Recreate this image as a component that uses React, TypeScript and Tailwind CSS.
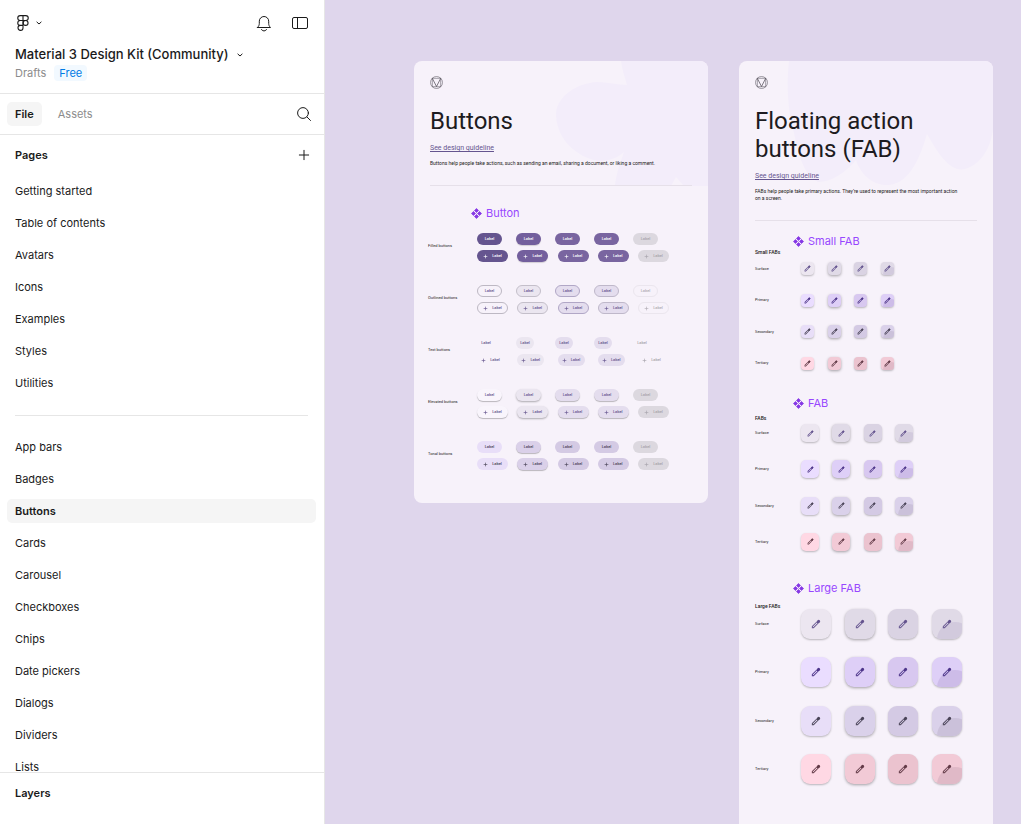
import { Plus } from "lucide-react";

const pages = ["Getting started", "Table of contents", "Avatars", "Icons", "Examples", "Styles", "Utilities"];
const components = [
  "App bars", "Badges", "Buttons", "Cards", "Carousel", "Checkboxes",
  "Chips", "Date pickers", "Dialogs", "Dividers", "Lists",
];

const buttonGroups = [
  {
    name: "Filled buttons",
    states: [
      "bg-[#65558f] text-white",
      "bg-[#735f9d] text-white shadow-[0_1px_1px_rgba(0,0,0,0.15)]",
      "bg-[#7965a0] text-white",
      "bg-[#7965a0] text-white",
      "bg-[#dcd8df] text-[#a7a3ab]",
    ],
  },
  {
    name: "Outlined buttons",
    states: [
      "border border-[#bdb8c3] text-[#65558f]",
      "border border-[#c4bfca] bg-[#ebe6f0] text-[#65558f]",
      "border border-[#b1a7c6] bg-[#e4ddee] text-[#65558f]",
      "border border-[#bfb8ca] bg-[#e4ddee] text-[#65558f]",
      "border border-[#ebe6ee] text-[#b0acb4]",
    ],
  },
  {
    name: "Text buttons",
    text: true,
    states: [
      "text-[#65558f]",
      "bg-[#ebe6f0] text-[#65558f]",
      "bg-[#e4ddee] text-[#65558f]",
      "bg-[#e4ddee] text-[#65558f]",
      "text-[#a7a3ab]",
    ],
  },
  {
    name: "Elevated buttons",
    states: [
      "bg-[#f9f5fc] text-[#65558f] shadow-[0_1px_1px_rgba(0,0,0,0.25)]",
      "bg-[#ebe6f0] text-[#65558f] shadow-[0_1px_2px_rgba(0,0,0,0.3)]",
      "bg-[#e4ddee] text-[#65558f] shadow-[0_1px_1px_rgba(0,0,0,0.25)]",
      "bg-[#e4ddee] text-[#65558f] shadow-[0_1px_1px_rgba(0,0,0,0.25)]",
      "bg-[#dcd8df] text-[#a7a3ab]",
    ],
  },
  {
    name: "Tonal buttons",
    states: [
      "bg-[#e8def8] text-[#4a4458]",
      "bg-[#dad0e9] text-[#4a4458] shadow-[0_1px_1px_rgba(0,0,0,0.25)]",
      "bg-[#d4cae4] text-[#4a4458]",
      "bg-[#d4cae4] text-[#4a4458]",
      "bg-[#dcd8df] text-[#a7a3ab]",
    ],
  },
];

const fabColors = [
  { name: "Surface", icon: "text-[#65558f]", states: ["bg-[#ece6f0]", "bg-[#e0dae7]", "bg-[#dad3e3]", "bg-[#e0dae7]"], ripple: "bg-[#d2cadd]" },
  { name: "Primary", icon: "text-[#4f378b]", states: ["bg-[#eaddff]", "bg-[#decff7]", "bg-[#d8c8f0]", "bg-[#decff7]"], ripple: "bg-[#cdbce8]" },
  { name: "Secondary", icon: "text-[#4a4458]", states: ["bg-[#e8def8]", "bg-[#dad1ea]", "bg-[#d4cae4]", "bg-[#dad1ea]"], ripple: "bg-[#cbc1da]" },
  { name: "Tertiary", icon: "text-[#633b48]", states: ["bg-[#ffd8e4]", "bg-[#f2cad6]", "bg-[#ebc3cf]", "bg-[#f2cad6]"], ripple: "bg-[#e0b9c7]" },
];

const fabSizes = {
  small: { label: "", grid: "mt-[7px] h-[108px]", row: "w-[93px]", box: "size-[13px] rounded-[4px]", icon: "size-[7px]" },
  medium: { label: "mt-1", grid: "mt-[3px] h-[127px]", row: "w-[112px]", box: "size-[18px] rounded-[5px]", icon: "size-[7px]" },
  large: { label: "mt-[7px]", grid: "h-[175px]", row: "w-[161px]", box: "size-[30px] rounded-[9px]", icon: "size-[10px]" },
};

function FigmaIcon() {
  return (
    <svg className="h-4 w-3" viewBox="0 0 12 16" fill="none" stroke="currentColor" strokeWidth="1.1">
      <path d="M6 .6H3.200a2.450 2.450 0 0 0 0 4.900H6zM6 .6h2.800a2.450 2.450 0 0 1 0 4.900H6zM6 5.500H3.200a2.450 2.450 0 0 0 0 4.900H6zM6 10.400H3.200A2.500 2.500 0 1 0 6 12.900z" />
      <circle cx="8.6" cy="7.950" r="2.450" />
    </svg>
  );
}

function ChevronIcon() {
  return (
    <svg className="h-[4px] w-[6px]" viewBox="0 0 6 4" fill="none" stroke="currentColor">
      <path d="m.6.8 2.400 2.200L5.400.8" />
    </svg>
  );
}

function BellIcon() {
  return (
    <svg className="h-[17px] w-4" viewBox="0 0 16 17" fill="none" stroke="currentColor" strokeLinecap="round" strokeLinejoin="round">
      <path d="M1.500 12.500h13c-1.200-1.200-1.800-2.400-1.800-4V6.200a4.700 4.700 0 0 0-9.400 0v2.300c0 1.600-.6 2.800-1.800 4zM5.500 14.500a2.600 2 0 0 0 5 0" />
    </svg>
  );
}

function PanelIcon() {
  return (
    <svg className="h-3 w-4" viewBox="0 0 16 12" fill="none" stroke="currentColor">
      <rect x=".5" y=".5" width="15" height="11" rx="1.5" />
      <path d="M5.500.5v11" />
    </svg>
  );
}

function SearchIcon() {
  return (
    <svg className="size-[14px]" viewBox="0 0 14 14" fill="none" stroke="currentColor" strokeLinecap="round">
      <circle cx="6" cy="6" r="5.4" />
      <path d="m10 10 3.500 3.500" />
    </svg>
  );
}

function MaterialLogo() {
  return (
    <svg className="size-[13px]" viewBox="0 0 13 13" fill="none" stroke="#49454f" strokeWidth=".5">
      <circle cx="6.5" cy="6.5" r="6" />
      <path d="M2.300 2.300h8.400v8.400H2.300z" />
      <path d="m2.300 2.300 4.200 8.200 4.200-8.200" strokeWidth=".7" />
    </svg>
  );
}

function ComponentIcon() {
  return (
    <svg className="size-[11px]" viewBox="0 0 12 12" fill="#8638e5" stroke="#8638e5" strokeWidth=".8" strokeLinejoin="round">
      <path d="M6 .5 8.200 2.700 6 4.900 3.800 2.700zM6 7.100l2.200 2.200L6 11.500 3.800 9.300zM2.700 3.800 4.900 6 2.700 8.200.5 6zM9.300 3.800 11.500 6 9.300 8.200 7.100 6z" />
    </svg>
  );
}

function PencilIcon({ className }: { className: string }) {
  return (
    <svg className={`relative ${className}`} viewBox="0 0 24 24" fill="currentColor">
      <path d="M4 20h1.500L15.500 10 14 8.500 4 18.500V20zM2 22v-4.500L16.800 2.700a2 2 0 0 1 2.800 0l1.700 1.700a2 2 0 0 1 0 2.800L6.500 22H2z" />
      <path d="m14.500 5 2.300-2.300a2 2 0 0 1 2.800 0l1.700 1.700a2 2 0 0 1 0 2.800L19 9.500z" />
    </svg>
  );
}

function PageLink({ name, active = false }: { name: string; active?: boolean }) {
  return (
    <li className="py-1 pr-2 pl-[7px]">
      <a href="#" className={`flex h-6 items-center rounded-[5px] px-2 text-[11px] ${active ? "bg-[#f5f5f5] font-semibold" : ""}`}>
        {name}
      </a>
    </li>
  );
}

function Sidebar() {
  return (
    <aside className="flex w-[325px] shrink-0 flex-col border-r border-[#e6e6e6] bg-white text-[#1a1a1a]">
      <header className="h-[94px] shrink-0 border-b border-[#e6e6e6] pt-[14px] pr-4 pl-[15px]">
        <div className="flex h-[18px] items-center">
          <button aria-label="Main menu" className="flex items-center gap-[7px] pl-[2px]">
            <FigmaIcon />
            <ChevronIcon />
          </button>
          <button aria-label="Notifications" className="ml-auto"><BellIcon /></button>
          <button aria-label="Minimize UI" className="ml-5"><PanelIcon /></button>
        </div>
        <button className="mt-[13px] flex h-5 items-center gap-[9px] text-[13px] font-medium">
          Material 3 Design Kit (Community)
          <ChevronIcon />
        </button>
        <div className="flex h-4 items-center gap-2 text-[11px] text-[#8c8c8c]">
          <a href="#">Drafts</a>
          <span className="rounded-[4px] bg-[#f2f9ff] px-[5px] leading-4 text-[#007be5]">Free</span>
        </div>
      </header>
      <nav className="flex h-[41px] shrink-0 items-center border-b border-[#e6e6e6] pr-[13px] pl-[7px] text-[11px]">
        <button className="h-6 rounded-[5px] bg-[#f5f5f5] px-2 font-semibold">File</button>
        <button className="ml-2 h-6 px-2 text-[#8c8c8c]">Assets</button>
        <button aria-label="Find" className="ml-auto"><SearchIcon /></button>
      </nav>
      <div className="flex h-10 shrink-0 items-center justify-between pr-3 pl-[15px]">
        <h2 className="text-[11px] font-semibold">Pages</h2>
        <button aria-label="Add page"><Plus className="size-4" strokeWidth={1.5} /></button>
      </div>
      <div className="min-h-0 flex-1 overflow-hidden">
        <ul>
          {pages.map(p => <PageLink key={p} name={p} />)}
        </ul>
        <hr className="mt-4 mr-4 mb-[15px] ml-[15px] border-[#e6e6e6]" />
        <ul>
          {components.map(p => <PageLink key={p} name={p} active={p === "Buttons"} />)}
        </ul>
      </div>
      <section className="h-[52px] shrink-0 border-t border-[#e6e6e6] px-[15px] pt-3">
        <h2 className="text-[11px] leading-4 font-semibold">Layers</h2>
      </section>
    </aside>
  );
}

function FrameHeader({ title, text }: { title: string; text: string }) {
  return (
    <div className="relative border-b border-[#e6e0e9] pb-[18px]">
      <MaterialLogo />
      <h1 className="mt-[18px] text-[24px] leading-7 text-[#1d1b20]">{title}</h1>
      <a href="#" className="mt-[7px] block text-[7px] leading-3 text-[#65558f] underline">See design guideline</a>
      <p className="mt-[6px] text-[5px] leading-[7px] whitespace-pre-line text-[#1d1b20]">{text}</p>
    </div>
  );
}

function SectionTitle({ children }: { children: string }) {
  return (
    <h2 className="flex h-4 items-center gap-1 font-['Inter',sans-serif] text-[11px] text-[#9747ff]">
      <ComponentIcon />
      {children}
    </h2>
  );
}

function ButtonsFrame() {
  return (
    <article className="relative w-[294px] shrink-0 overflow-hidden rounded-[8px] bg-[#f7f2fa] px-4 pt-[15px] pb-[33px]">
      <svg className="absolute top-0 right-0 h-[125px] w-[152px]" viewBox="0 0 152 125" fill="#f3edfa">
        <path d="M65 0h87v125h-24l-8-9-5 9H59c1-12 5-22 9-34-8 7-20 11-30 8C16 93 0 75 0 52 2 34 22 22 41 21c10 0 21 3 30 3-2-8-5-15-6-24z" />
      </svg>
      <FrameHeader title="Buttons" text="Buttons help people take actions, such as sending an email, sharing a document, or liking a comment." />
      <div className="mt-[19px] ml-[41px]"><SectionTitle>Button</SectionTitle></div>
      <div className="mt-3 -ml-[2px] flex flex-col gap-[23px]">
        {buttonGroups.map(g => (
          <div key={g.name} className="flex items-center">
            <h3 className="w-[49px] pb-[3px] text-[4px] leading-[6px] text-[#1d1b20]">{g.name}</h3>
            <div className="flex flex-col gap-[5px] text-[4px] font-medium">
              <div className={`flex justify-between ${g.text ? "w-[174px]" : "w-[181px]"}`}>
                {g.states.map((s, i) => (
                  <button key={i} className={`flex h-3 items-center justify-center rounded-full ${g.text ? "w-[18px]" : "w-[25px]"} ${s}`}>Label</button>
                ))}
              </div>
              <div className={`flex justify-between ${g.text ? "w-[188px]" : "w-[192px]"}`}>
                {g.states.map((s, i) => (
                  <button key={i} className={`flex h-3 items-center justify-center gap-1 rounded-full ${g.text ? "w-[27px]" : "w-[31px]"} ${s}`}>
                    <Plus className="size-[5px]" strokeWidth={3} />
                    Label
                  </button>
                ))}
              </div>
            </div>
          </div>
        ))}
      </div>
    </article>
  );
}

function FabSection({ title, label, size }: { title: string; label: string; size: keyof typeof fabSizes }) {
  const s = fabSizes[size];
  return (
    <section>
      <div className="ml-[38px]"><SectionTitle>{title}</SectionTitle></div>
      <h3 className={`text-[5px] leading-[6px] font-medium text-[#1d1b20] ${s.label}`}>{label}</h3>
      <div className={`flex flex-col justify-between ${s.grid}`}>
        {fabColors.map(c => (
          <div key={c.name} className="flex items-center">
            <span className="w-[46px] text-[4px] leading-[6px] text-[#1d1b20]">{c.name}</span>
            <div className={`flex justify-between ${s.row}`}>
              {c.states.map((bg, i) => (
                <button
                  key={i}
                  aria-label={`${title} ${c.name} ${i + 1}`}
                  className={`relative flex items-center justify-center overflow-hidden ${s.box} ${bg} ${c.icon} ${i === 1 ? "shadow-[0_1px_3px_rgba(0,0,0,0.35)]" : "shadow-[0_1px_2px_rgba(0,0,0,0.25)]"}`}
                >
                  {i === 3 && <span className={`absolute top-[42%] left-[17%] size-[120%] rounded-full ${c.ripple}`} />}
                  <PencilIcon className={s.icon} />
                </button>
              ))}
            </div>
          </div>
        ))}
      </div>
    </section>
  );
}

function FabFrame() {
  return (
    <article className="relative w-[254px] shrink-0 overflow-hidden rounded-t-[8px] bg-[#f7f2fa] px-4 pt-[15px] pb-20">
      <svg className="absolute top-0 right-0 h-[125px] w-[206px]" viewBox="0 0 206 125" fill="#f3edfa">
        <path d="M2 0h204v68c-2 18-12 36-28 40-14 3-25-12-38-35-6 20-16 49-38 51-17 1-29-12-33-25-10 12-24 22-38 22C12 112 10 80 4 60 0 38 0 18 2 0z" />
      </svg>
      <FrameHeader title="Floating action buttons (FAB)" text={"FABs help people take primary actions. They’re used to represent the most important action\non a screen."} />
      <div className="mt-3 flex flex-col">
        <FabSection title="Small FAB" label="Small FABs" size="small" />
        <div className="mt-[25px] mb-[29px]">
          <FabSection title="FAB" label="FABs" size="medium" />
        </div>
        <FabSection title="Large FAB" label="Large FABs" size="large" />
      </div>
    </article>
  );
}

export default function App() {
  return (
    <div className="flex h-screen overflow-hidden bg-[#dfd6ec] font-['Inter',sans-serif]">
      <Sidebar />
      <main className="flex min-w-0 flex-1 items-start gap-[31px] overflow-hidden pt-[61px] pl-[89px] font-['Roboto',sans-serif]">
        <ButtonsFrame />
        <FabFrame />
      </main>
    </div>
  );
}
